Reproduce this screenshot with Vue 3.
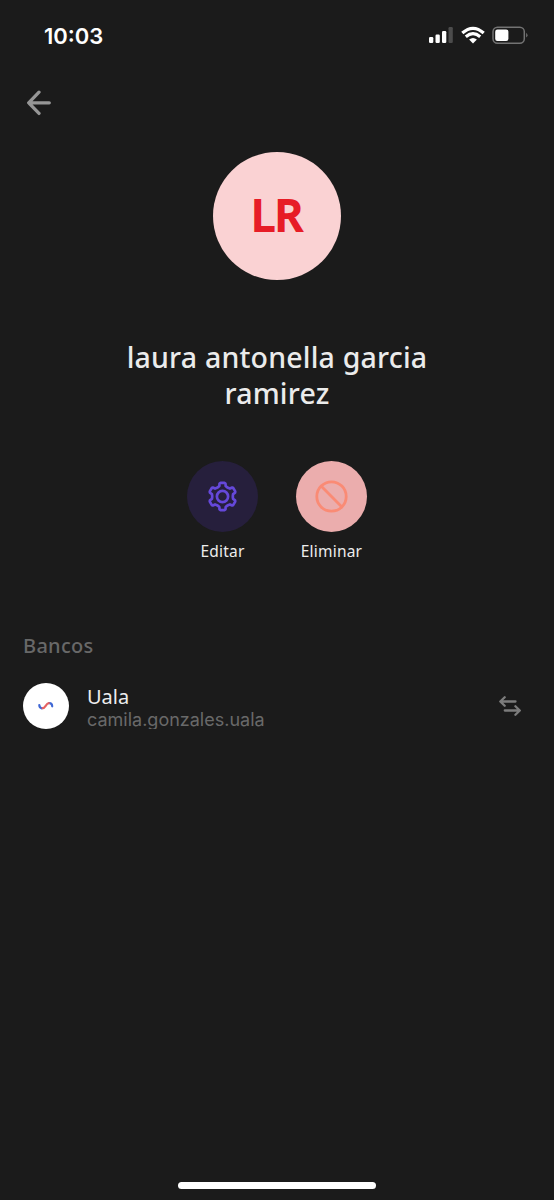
<script setup>
const gearPoints = []
for (let k = 0; k < 6; k++) {
  for (const [r, off] of [[10.4, -24], [10.9, -17], [13.2, -13], [13.7, -8], [13.7, 8], [13.2, 13], [10.9, 17], [10.4, 24]]) {
    const a = ((k * 60 + off - 90) * Math.PI) / 180
    gearPoints.push(`${(r * Math.cos(a)).toFixed(2)},${(r * Math.sin(a)).toFixed(2)}`)
  }
}
const gear = gearPoints.join(' ')
</script>

<template>
  <div class="screen">
    <header class="status">
      <span class="time">10:03</span>
      <svg class="status-icons" width="100" height="20" viewBox="0 0 100 20">
        <g fill="#fff">
          <rect x="1" y="12" width="4.3" height="6" rx="1.2" />
          <rect x="7.5" y="9.5" width="4.3" height="8.5" rx="1.2" />
          <rect x="14" y="6" width="4.3" height="12" rx="1.2" />
          <rect x="20.5" y="2" width="4.3" height="16" rx="1.2" fill="#4c4c4c" />
          <path d="M45 18.4 L41.1 14.5 Q45 11.4 48.9 14.5 Z" />
        </g>
        <g fill="none" stroke="#fff" stroke-width="3.2">
          <path d="M37.8 11.7 Q45 5.7 52.2 11.7" />
          <path d="M34.3 8 Q45 -1.4 55.7 8" />
        </g>
        <rect x="65" y="2.2" width="31.3" height="16" rx="4.5" fill="none" stroke="#737373" stroke-width="1.5" />
        <rect x="67.2" y="4.5" width="13.2" height="11.4" rx="2.2" fill="#fff" />
        <path d="M98.2 7.7 Q100.8 10.1 98.2 12.6 Z" fill="#737373" />
      </svg>
    </header>

    <nav class="nav">
      <svg width="26" height="26" viewBox="0 0 26 26" fill="none" stroke="#969696" stroke-width="3.3" stroke-linecap="round" stroke-linejoin="round">
        <path d="M23.3 12.8H2.7M13 2.2L2.7 12.8L13 23.4" />
      </svg>
    </nav>

    <div class="avatar"><span>LR</span></div>

    <h1 class="name"><span>laura antonella garcia</span><span>ramirez</span></h1>

    <div class="actions">
      <div class="action">
        <div class="circle edit">
          <svg width="35" height="35" viewBox="-17.5 -17.5 35 35" fill="none" stroke="#6548d9" stroke-width="2.7" stroke-linejoin="round">
            <polygon :points="gear" />
            <circle r="5.6" />
          </svg>
        </div>
        <span class="label">Editar</span>
      </div>
      <div class="action">
        <div class="circle remove">
          <svg width="35" height="35" viewBox="-17.5 -17.5 35 35" fill="none" stroke="#fa8b75" stroke-width="2.8">
            <circle r="14.7" />
            <path d="M-10.4 -10.4L10.4 10.4" />
          </svg>
        </div>
        <span class="label">Eliminar</span>
      </div>
    </div>

    <h2 class="section">Bancos</h2>
    <div class="bank">
      <div class="logo">
        <svg width="18" height="12" viewBox="0 0 18 12" fill="none" stroke-width="2.2" stroke-linecap="round">
          <path d="M2.3 5Q2.4 7.9 4.8 8.3" stroke="#4068d5" />
          <path d="M12.2 3.2Q15 3 15.2 6.3" stroke="#4068d5" />
          <path d="M5.7 8.2C8.6 7.9 8.7 3.7 11.8 3.2" stroke="#e56363" />
        </svg>
      </div>
      <div class="details">
        <span class="bank-name">Uala</span>
        <span class="alias">camila.gonzales.uala</span>
      </div>
      <svg class="swap" width="24" height="24" viewBox="0 0 24 24" fill="none" stroke="#7c7c7c" stroke-width="2.3" stroke-linecap="round" stroke-linejoin="round">
        <path d="M17.5 7.5H2.5M6.7 3.2L2.3 7.5L6.7 11.8M6.8 16.5H21.5M17.4 12.2L21.8 16.5L17.4 20.8" />
      </svg>
    </div>
    <div class="home"></div>
  </div>
</template>

<style>
body { background: #1b1b1b; }
</style>

<style scoped>
.screen {
  box-sizing: border-box;
  width: 554px;
  height: 1200px;
  background: #1b1b1b;
  color: #ededed;
  font-family: "Noto Sans", sans-serif;
  display: flex;
  flex-direction: column;
  overflow: hidden;
}
.status {
  height: 70px;
  padding: 0 26px 0 44px;
  display: flex;
  justify-content: space-between;
}
.time {
  margin-top: 22px;
  font: 600 22px/28px Inter, sans-serif;
  color: #fff;
}
.status-icons { margin-top: 25px; }
.nav { height: 82px; padding: 20px 0 0 26px; box-sizing: border-box; }
.nav svg { display: block; }
.avatar {
  width: 128px;
  height: 128px;
  border-radius: 50%;
  background: #fad2d3;
  align-self: center;
  display: flex;
  align-items: center;
  justify-content: center;
  flex: none;
}
.avatar span {
  font: 500 44px/60px "Noto Sans", sans-serif;
  color: #e71c26;
  -webkit-text-stroke: 2px #e71c26;
  stroke-linejoin: round;
  padding-bottom: 4px;
}
.name {
  margin: 59px 0 0;
  display: flex;
  flex-direction: column;
  align-items: center;
  font: 500 28.5px/36px "Noto Sans", sans-serif;
  letter-spacing: 0.2px;
  color: #ebebeb;
}
.actions {
  margin-top: 50px;
  display: flex;
  justify-content: center;
  gap: 38px;
}
.action { width: 71px; display: flex; flex-direction: column; align-items: center; }
.circle {
  width: 71px;
  height: 71px;
  border-radius: 50%;
  display: flex;
  align-items: center;
  justify-content: center;
}
.edit { background: #261f3c; }
.remove { background: #ebadad; }
.label { margin-top: 8px; font-size: 15.5px; line-height: 22px; letter-spacing: 0.2px; white-space: nowrap; }
.section {
  margin: 70px 0 0 23px;
  font: 500 20px/28px "Noto Sans", sans-serif;
  letter-spacing: 0.3px;
  color: #686868;
}
.bank { margin-top: 23px; padding: 0 32px 0 23px; display: flex; height: 46px; }
.logo {
  width: 46px;
  height: 46px;
  border-radius: 50%;
  background: #fff;
  display: flex;
  align-items: center;
  justify-content: center;
}
.details { margin-left: 18px; flex: 1; display: flex; flex-direction: column; align-items: flex-start; }
.bank-name { font-size: 20px; line-height: 28px; height: 24px; }
.alias { font: 400 18px/26px Inter, sans-serif; height: 22px; overflow: hidden; color: #696969; }
.swap { margin-top: 11px; }
.home {
  width: 198px;
  height: 7px;
  border-radius: 4px;
  background: #fff;
  align-self: center;
  margin-top: auto;
  margin-bottom: 11px;
}
</style>
